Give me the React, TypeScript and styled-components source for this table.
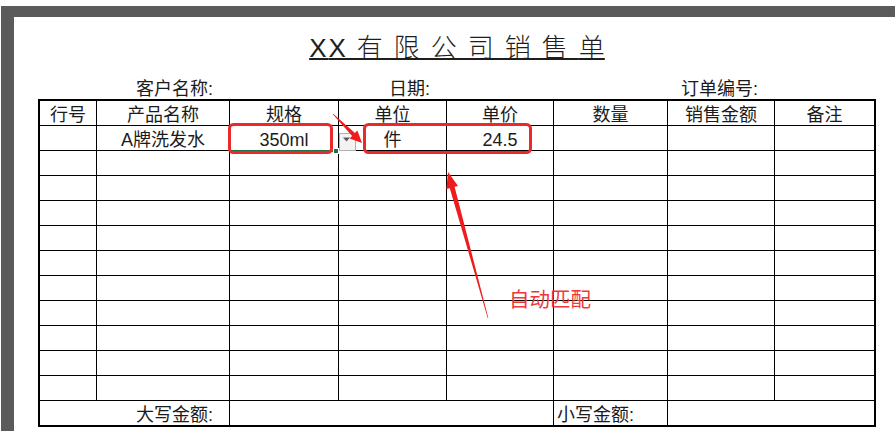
import React from "react";
import styled, { createGlobalStyle } from "styled-components";

const Global = createGlobalStyle`
  html, body { margin: 0; padding: 0; background: #fff; }
  body {
    font-family: "Liberation Sans", "Noto Sans CJK SC", sans-serif;
    color: #1b1b1b;
  }
`;

const COLS = "56px 132px 108px 107px 106px 113px 106px 99px";

const Screen = styled.div`
  position: relative;
  width: 895px;
  height: 433px;
  overflow: hidden;
  background: #fff;
`;

const Frame = styled.div`
  box-sizing: border-box;
  margin: 6px 0 0 1px;
  height: 425px;
  border-top: 11px solid #5b5b5b;
  border-left: 13px solid #5b5b5b;
  background: #fff;
  padding: 11px 0 0 24px;
`;

const Sheet = styled.div`
  width: 838px;
  display: flex;
  flex-direction: column;
`;

const Title = styled.div`
  height: 40px;
  line-height: 40px;
  text-align: center;
  font-size: 26px;
  font-weight: 300;
  color: #1e1e1e;
`;

const TitleText = styled.span`
  letter-spacing: 11px;
  text-decoration: underline;
  text-decoration-thickness: 1.5px;
  text-decoration-skip-ink: none;
`;

const Tight = styled.span<{ $ls: number }>`
  letter-spacing: ${(p) => p.$ls}px;
`;

const InfoRow = styled.div`
  display: grid;
  grid-template-columns: ${COLS};
  column-gap: 1px;
  padding: 0 2px;
  height: 31px;
  align-items: end;
  font-size: 18px;
  line-height: 20px;
`;

const Info = styled.div<{ $span: string }>`
  grid-column: ${(p) => p.$span};
  text-align: right;
  padding-right: 16px;
`;

const Grid = styled.div`
  box-sizing: border-box;
  width: 838px;
  display: grid;
  grid-template-columns: ${COLS};
  grid-auto-rows: 24px;
  gap: 1px;
  background: #000;
  border: 2px solid #000;
`;

const Cell = styled.div<{ $span?: string; $align?: string; $padL?: number; $padR?: number }>`
  grid-column: ${(p) => p.$span ?? "auto"};
  background: #fff;
  display: flex;
  align-items: flex-end;
  justify-content: ${(p) => p.$align ?? "center"};
  padding-left: ${(p) => p.$padL ?? 0}px;
  padding-right: ${(p) => p.$padR ?? 0}px;
  font-size: 18px;
  line-height: 20px;
  white-space: nowrap;
  overflow: hidden;
`;

const Overlay = styled.svg`
  position: absolute;
  left: 0;
  top: 0;
  pointer-events: none;
`;

const Note = styled.div`
  position: absolute;
  left: 509px;
  top: 288px;
  font-family: "Noto Sans CJK SC", sans-serif;
  font-size: 20.5px;
  line-height: 20px;
  color: #f0383a;
  white-space: nowrap;
`;

const headers = ["行号", "产品名称", "规格", "单位", "单价", "数量", "销售金额", "备注"];
const rows: string[][] = [
  ["", "A牌洗发水", "350ml", "件", "24.5", "", "", ""],
  ...Array.from({ length: 10 }, () => ["", "", "", "", "", "", "", ""]),
];

export default function App() {
  return (
    <Screen>
      <Global />
      <Frame>
        <Sheet>
          <Title>
            <TitleText>
              <Tight $ls={2}>X</Tight>X有限公司销售<Tight $ls={0}>单</Tight>
            </TitleText>
          </Title>
          <InfoRow>
            <Info $span="1 / 3">客户名称:</Info>
            <Info $span="3 / 5">日期:</Info>
            <Info $span="7 / 8">订单编号:</Info>
          </InfoRow>
          <Grid>
            {headers.map((h) => (
              <Cell key={h}>{h}</Cell>
            ))}
            {rows.map((r, i) =>
              r.map((v, j) => <Cell key={`${i}-${j}`}>{v}</Cell>)
            )}
            <Cell $span="1 / 3" $align="flex-end" $padR={16}>
              大写金额:
            </Cell>
            <Cell $span="3 / 6" />
            <Cell $align="flex-start" $padL={3}>
              小写金额:
            </Cell>
            <Cell $span="7 / 9" />
          </Grid>
        </Sheet>
      </Frame>

      <Overlay width="895" height="433" viewBox="0 0 895 433">
        <rect x="231" y="150" width="104" height="2" fill="#217346" />
        <rect x="333.5" y="148.5" width="5" height="5" fill="#217346" stroke="#fff" strokeWidth="1" />
        <rect x="339.5" y="133.5" width="16" height="17" fill="#f3f3f3" stroke="#b0b0b0" />
        <polygon points="343,137.5 350,137.5 346.5,141.5" fill="#5a5a5a" />
        <rect x="229.5" y="124.5" width="102" height="28" rx="4" fill="none" stroke="#ea2a2a" strokeWidth="3" />
        <rect x="364.5" y="124.5" width="166" height="28" rx="4" fill="none" stroke="#ea2a2a" strokeWidth="3" />
        <polygon
          points="362,143 349.6,138.4 352.1,135.9 332.8,114.2 333.2,113.8 354.9,133.1 357.4,130.6"
          fill="#ee1c1c"
        />
        <polygon
          points="448,172 458,185.9 454.6,186.8 488.3,317.9 487.7,318.1 449.8,188.2 446.4,189.1"
          fill="#ee1c1c"
        />
      </Overlay>
      <Note>自动匹配</Note>
    </Screen>
  );
}
